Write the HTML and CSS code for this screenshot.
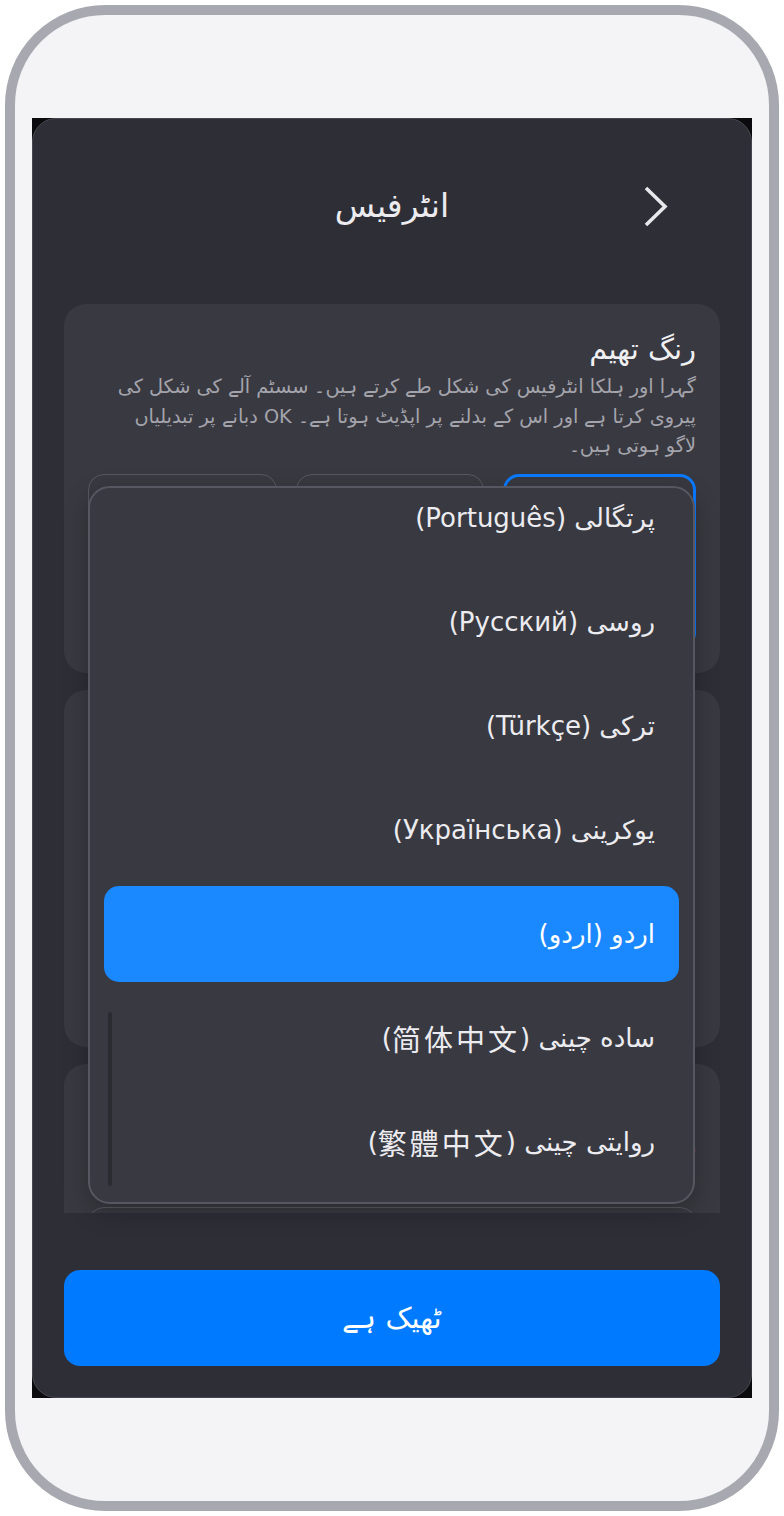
FILE: index.html
```html
<!DOCTYPE html>
<html lang="ur" dir="rtl">
<head>
<meta charset="utf-8">
<title>انٹرفیس</title>
<link rel="stylesheet" href="styles.css">
</head>
<body>
<div class="device">
  <div class="screen">
    <div class="panel">
      <header class="header">
        <button class="back" aria-label="واپس">
          <svg viewBox="0 0 48 48" width="48" height="48"><polyline points="14,6 33,24.5 14,43" fill="none" stroke="#e8e8ec" stroke-width="3.6" stroke-linejoin="miter"/></svg>
        </button>
        <h1 class="title">انٹرفیس</h1>
        <span class="spacer"></span>
      </header>
      <main class="scroll">
        <section class="card card-theme">
          <h2 class="card-title">رنگ تھیم</h2>
          <p class="card-desc">گہرا اور ہلکا انٹرفیس کی شکل طے کرتے ہیں۔ سسٹم آلے کی شکل کی پیروی کرتا ہے اور اس کے بدلنے پر اپڈیٹ ہوتا ہے۔ OK دبانے پر تبدیلیاں لاگو ہوتی ہیں۔</p>
          <div class="options">
            <div class="option selected"><span class="opt-label">سسٹم</span></div>
            <div class="option"><span class="opt-label">ہلکا</span></div>
            <div class="option"><span class="opt-label">گہرا</span></div>
          </div>
        </section>
        <section class="card card-mid">
          <h2 class="card-title">متن کا سائز</h2>
          <p class="card-desc">متن کا سائز منتخب کریں۔</p>
        </section>
        <section class="card card-lang">
          <h2 class="card-title">زبان</h2>
          <p class="card-desc">زبان منتخب کریں۔</p>
          <div class="select"></div>
        </section>
      </main>
      <footer class="footer">
        <button class="ok">ٹھیک ہے</button>
      </footer>
    </div>
    <div class="dropdown">
      <ul class="list">
        <li class="item">پرتگالی (Português)</li>
        <li class="item">روسی (Русский)</li>
        <li class="item">ترکی (Türkçe)</li>
        <li class="item">یوکرینی (Українська)</li>
        <li class="item active">اردو (اردو)</li>
        <li class="item">ساده چینی (<span lang="zh-Hans" class="sc">简体中文</span>)</li>
        <li class="item">روایتی چینی (<span lang="zh-Hant" class="tc">繁體中文</span>)</li>
      </ul>
      <span class="thumb"></span>
    </div>
  </div>
</div>
</body>
</html>
```

FILE: styles.css
```css
* { box-sizing: border-box; }
html, body { margin: 0; padding: 0; background: #ffffff; }
body {
  font-family: "DejaVu Sans", "Noto Sans CJK SC", sans-serif;
  color: #ececf0;
}
.device {
  margin: 5px;
  width: 774px;
  height: 1506px;
  border: 10px solid #a8a9b0;
  border-radius: 100px;
  background: #f4f4f6;
  padding: 103px 17px;
}
.screen {
  position: relative;
  height: 1280px;
  background: #0b0b0d;
}
.panel {
  height: 100%;
  background: #2e2e37;
  border: 1px solid #474751;
  border-radius: 24px;
  display: flex;
  flex-direction: column;
  overflow: hidden;
}
.header {
  display: grid;
  grid-template-columns: 48px 1fr 48px;
  align-items: center;
  height: 48px;
  margin-top: 63px;
  padding: 0 71px;
  flex: none;
}
.back {
  width: 48px; height: 48px;
  padding: 0; margin: 0;
  border: 0; background: none;
  display: flex; align-items: center; justify-content: center;
}
.back svg { display: block; }
.title {
  margin: 0;
  text-align: center;
  font-size: 33px;
  font-weight: 400;
  line-height: 48px;
  color: #ececf0;
}
.scroll {
  flex: 1;
  overflow: hidden;
  padding: 74px 31px 0;
  display: flex;
  flex-direction: column;
  gap: 17px;
}
.card {
  flex: none;
  background: #393941;
  border-radius: 22px;
  padding: 24px;
}
.card-theme { height: 369px; }
.card-mid { height: 357px; }
.card-lang { height: 300px; }
.card-title {
  margin: 3px 0 5px;
  font-size: 29px;
  font-weight: 400;
  line-height: 36px;
  color: #f0f0f3;
}
.card-desc {
  margin: 0;
  max-width: 590px;
  font-size: 19.3px;
  line-height: 29.5px;
  color: #a4a4ac;
}
.options {
  margin-top: 13.5px;
  display: flex;
  gap: 19px;
}
.option {
  flex: 1;
  height: 175px;
  border: 1.5px solid #585862;
  border-radius: 16px;
  display: flex;
  align-items: flex-end;
  justify-content: center;
  padding-bottom: 20px;
}
.option.selected { border: 3px solid #0a7aff; }
.opt-label { font-size: 22px; color: #d8d8de; }
.card-lang .select {
  margin-top: 45.5px;
  height: 72px;
  border: 1.5px solid #585862;
  border-radius: 16px;
}
.footer {
  flex: none;
  padding: 57px 31px 31px;
}
.ok {
  display: block;
  width: 100%;
  height: 96px;
  border: 0;
  border-radius: 16px;
  background: #007aff;
  color: #ffffff;
  font-family: inherit;
  font-size: 29px;
}
.dropdown {
  position: absolute;
  left: 56px;
  top: 368px;
  width: 607px;
  height: 718px;
  background: #393941;
  border: 2px solid #575762;
  border-radius: 22px;
  overflow: hidden;
  box-shadow: 0 8px 24px rgba(0,0,0,0.25);
}
.list {
  list-style: none;
  margin: -18px 0 0;
  padding: 0;
}
.item {
  height: 96px;
  margin: 0 14px 8px;
  padding: 0 24px;
  border-radius: 15px;
  display: flex;
  align-items: center;
  font-size: 26px;
  color: #ececf0;
}
.item.active { background: #1a88ff; color: #ffffff; }
.sc, .tc { font-size: 29px; letter-spacing: 3px; }
.sc { font-family: "Noto Sans CJK SC", sans-serif; }
.tc { font-family: "Noto Sans CJK TC", sans-serif; }
.thumb {
  position: absolute;
  left: 18px;
  top: 524px;
  width: 4px;
  height: 174px;
  border-radius: 2px;
  background: #2b2b32;
}
```
